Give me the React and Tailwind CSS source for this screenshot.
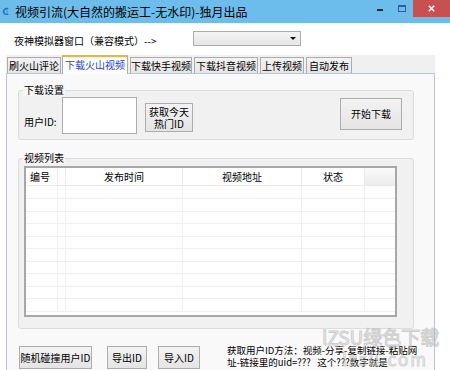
import React from 'react';

function Btn({ className, children }) {
  return (
    <div
      className={
        'flex items-center justify-center border border-[#adadad] bg-gradient-to-b from-[#f3f3f3] to-[#e4e4e4] text-[10px] leading-[12px] text-black ' +
        className
      }
    >
      {children}
    </div>
  );
}

function Tab({ className, children }) {
  return (
    <div
      className={
        'flex h-[16px] items-center justify-center border border-b-0 border-[#acacac] bg-gradient-to-b from-[#f3f3f3] to-[#e6e6e6] text-[10px] leading-[12px] ' +
        className
      }
    >
      {children}
    </div>
  );
}

export default function App() {
  const rows = [13, 13, 12, 13, 12, 13, 12, 13, 12, 13];
  return (
    <div className="relative h-[370px] w-[450px] overflow-hidden bg-white text-[10px] leading-none text-black [font-family:'Noto_Sans_CJK_SC','Noto_Sans',sans-serif]">
      {/* Title bar */}
      <div className="flex h-[23px] items-start bg-[#6cbdeb]">
        <svg className="ml-[2px] mt-[7px] h-[9px] w-[8px]" viewBox="0 0 8 9">
          <path d="M6.5 1.2 C3.5 0 0.6 2 0.8 4.8 C1 7.6 4 9 6.8 7.4 L5.8 6.3 C4 7.2 2.4 6.2 2.4 4.6 C2.4 3 4 2 5.6 2.6 Z" fill="#2f6fb8" />
          <circle cx="5.2" cy="4.6" r="1.1" fill="#39a7d8" />
        </svg>
        <div className="ml-[5px] mt-[4px] text-[12px] leading-[15px] text-black">
          视频引流(大自然的搬运工-无水印)-独月出品
        </div>
        <div className="flex-1" />
        <div className="flex h-[17px] w-[22px] items-center justify-center">
          <div className="mt-[3px] h-[2px] w-[6px] bg-[#1c2c3c]" />
        </div>
        <div className="flex h-[17px] w-[22px] items-start justify-center">
          <div className="mt-[5px] h-[7px] w-[8px] border border-t-2 border-[#2d5f8f]" />
        </div>
        <div className="flex h-[17px] w-[37px] items-center justify-center bg-[#c75050]">
          <svg className="h-[7px] w-[7px]" viewBox="0 0 7 7">
            <path d="M0.8 0.8 L6.2 6.2 M6.2 0.8 L0.8 6.2" stroke="#ffffff" strokeWidth="1.6" />
          </svg>
        </div>
      </div>

      {/* top row */}
      <div className="flex h-[32px] items-start">
        <div className="ml-[14px] mt-[12px] w-[179px] text-[10px] leading-[11px]">
          夜神模拟器窗口（兼容模式）{'-->'}
        </div>
        <div className="mt-[8px] flex h-[15px] w-[108px] items-center justify-end border border-[#acacac] bg-gradient-to-b from-[#f4f4f4] to-[#e6e6e6] pr-[4px]">
          <svg className="h-[3px] w-[6px]" viewBox="0 0 6 3">
            <path d="M0 0 L6 0 L3 3 Z" fill="#000" />
          </svg>
        </div>
      </div>

      {/* tab control */}
      <div className="ml-[6px] w-[429px]">
        <div className="flex h-[18px] items-end bg-[#f0f0f0]">
          <Tab className="ml-[1px] w-[54px]">刷火山评论</Tab>
          <div className="relative z-10 mb-[-1px] ml-[1px] flex h-[19px] w-[66px] items-center justify-center border-x border-t-2 border-x-[#acacac] border-t-[#f2b43c] bg-white pb-[1px] text-[10px] leading-[12px] text-[#1a3fd0]">
            下载火山视频
          </div>
          <Tab className="ml-[2px] w-[62px]">下载快手视频</Tab>
          <Tab className="ml-[2px] w-[64px]">下载抖音视频</Tab>
          <Tab className="ml-[2px] w-[44px]">上传视频</Tab>
          <Tab className="ml-[2px] w-[46px]">自动发布</Tab>
        </div>

        <div className="h-[300px] border border-[#b9c5d3] bg-[#f9f9f9]">
          {/* group 1 */}
          <div className="relative ml-[11px] mt-[16px] h-[50px] w-[396px] rounded-[3px] border border-[#dcdcdc] bg-[#f1f1f1]">
            <div className="absolute left-[4px] top-[-7px] bg-[#f6f6f6] px-[1px] text-[10px] leading-[12px]">
              下载设置
            </div>
            <div className="flex items-start pl-[5px]">
              <div className="mt-[25px] w-[38px] text-[10px] leading-[11px]">用户ID:</div>
              <div className="mt-[6px] h-[37px] w-[75px] border border-[#abadb3] bg-white" />
              <Btn className="ml-[8px] mt-[12px] h-[29px] w-[48px] flex-col">
                <span>获取今天</span>
                <span>热门ID</span>
              </Btn>
              <div className="flex-1" />
              <Btn className="mr-[11px] mt-[7px] h-[32px] w-[62px]">开始下载</Btn>
            </div>
          </div>

          {/* group 2 */}
          <div className="relative ml-[11px] mt-[18px] h-[171px] w-[396px] rounded-[3px] border border-[#dcdcdc] bg-[#f1f1f1]">
            <div className="absolute left-[4px] top-[-7px] bg-[#f6f6f6] px-[1px] text-[10px] leading-[12px]">
              视频列表
            </div>
            <div className="ml-[5px] mt-[7px] h-[151px] w-[373px] border-2 border-[#a7a7a7] bg-white">
              <div className="flex h-[18px] border-b border-[#e3e9ef] text-[10px] leading-[17px]">
                <div className="w-[32px] border-r border-[#e3e9ef] pl-[4px]">编号</div>
                <div className="w-[8px] border-r border-[#e3e9ef]" />
                <div className="w-[117px] border-r border-[#e3e9ef] text-center">发布时间</div>
                <div className="w-[119px] border-r border-[#e3e9ef] text-center">视频地址</div>
                <div className="w-[63px] border-r border-[#e3e9ef] text-center">状态</div>
                <div className="flex-1 bg-gradient-to-b from-[#fbfbfb] to-[#ececec]" />
              </div>
              {rows.map((h, i) => (
                <div
                  key={i}
                  className={
                    'flex border-b border-[#f0f0f0] ' + (h === 13 ? 'h-[13px]' : 'h-[12px]')
                  }
                >
                  <div className="w-[32px] border-r border-[#f0f0f0]" />
                  <div className="w-[8px] border-r border-[#f0f0f0]" />
                  <div className="w-[117px] border-r border-[#f0f0f0]" />
                  <div className="w-[119px] border-r border-[#f0f0f0]" />
                  <div className="w-[63px] border-r border-[#f0f0f0]" />
                  <div className="flex-1" />
                </div>
              ))}
            </div>
          </div>

          {/* bottom row */}
          <div className="flex items-start">
            <Btn className="ml-[12px] mt-[17px] h-[23px] w-[73px]">随机碰撞用户ID</Btn>
            <Btn className="ml-[15px] mt-[17px] h-[23px] w-[40px]">导出ID</Btn>
            <Btn className="ml-[11px] mt-[17px] h-[23px] w-[42px]">导入ID</Btn>
            <div className="ml-[27px] mt-[15px] whitespace-pre text-[9.5px] leading-[12px]">
              <div>获取用户ID方法：视频-分享-复制链接-粘贴网</div>
              <div>址-链接里的uid=???   这个???数字就是</div>
            </div>
          </div>
        </div>
      </div>

      {/* watermark */}
      <div className="pointer-events-none absolute left-[322px] top-[327px] text-[19px] leading-[20px] text-[#eeeeee] opacity-60 [-webkit-text-stroke:1px_#b0b0b0]">
        lZSU绿色下载
      </div>
      <div className="pointer-events-none absolute left-[342px] top-[350px] text-[17px] leading-[18px] tracking-[2px] text-[#eeeeee] opacity-50 [-webkit-text-stroke:1px_#b0b0b0]">
        lzsu.com
      </div>
    </div>
  );
}
